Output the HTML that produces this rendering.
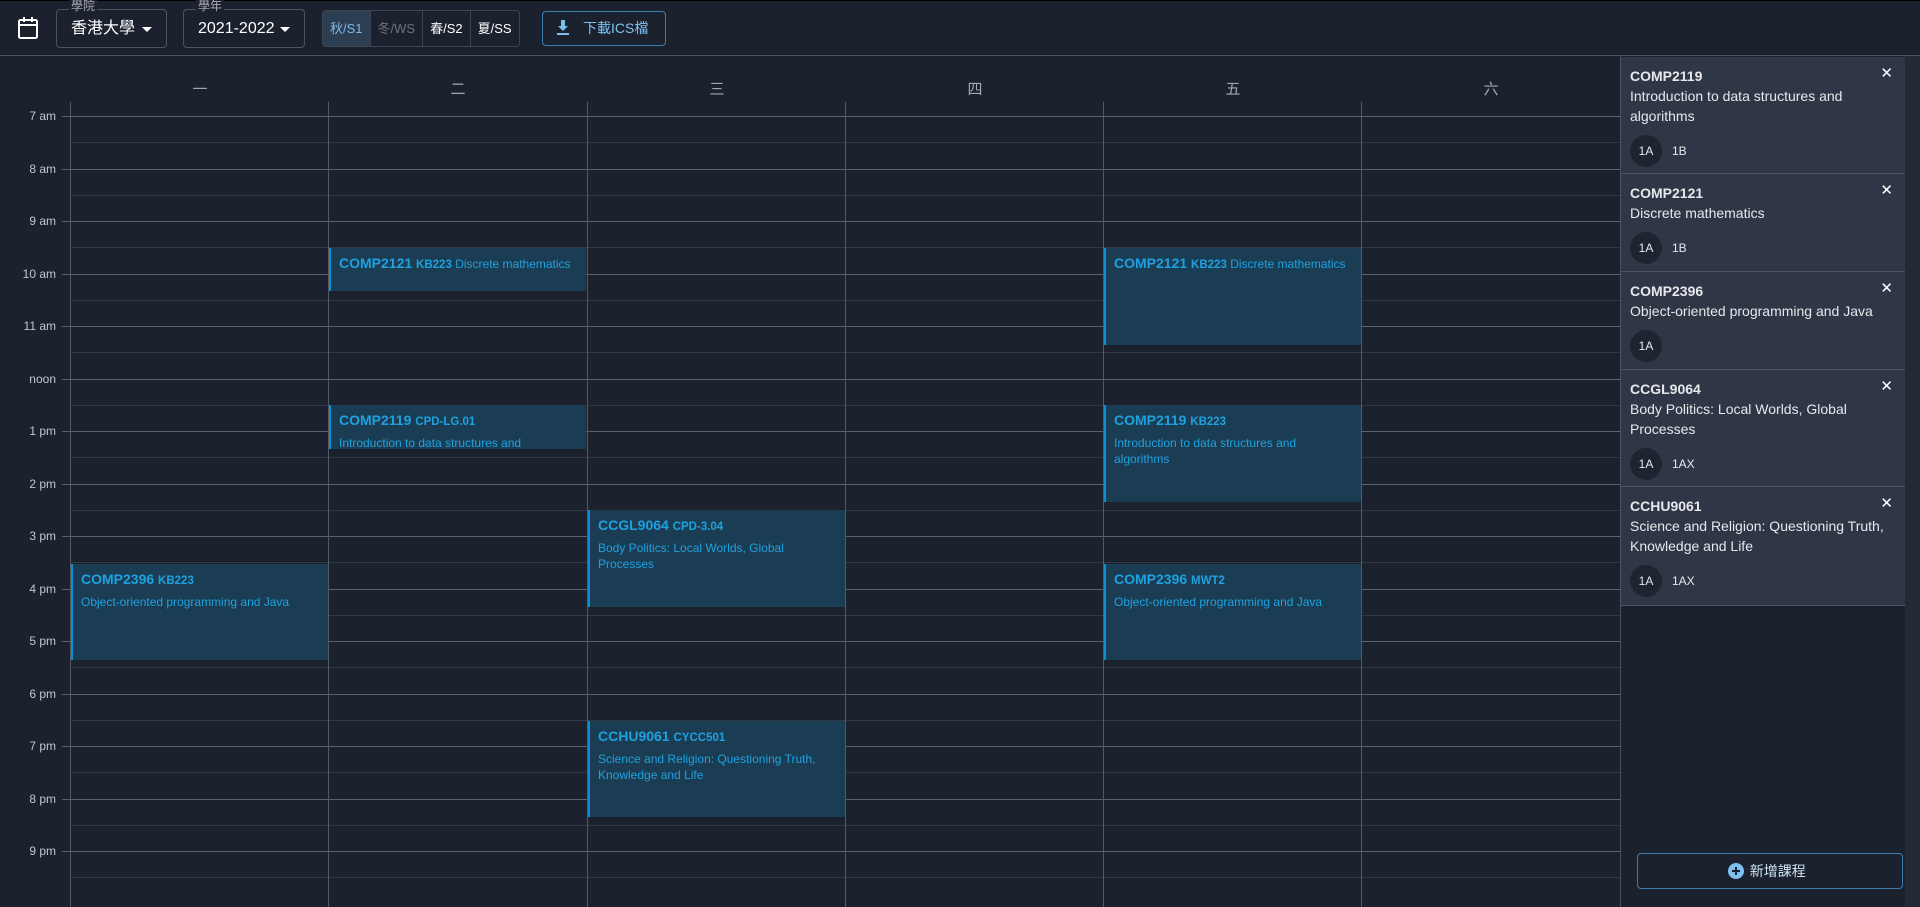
<!DOCTYPE html>
<html><head><meta charset="utf-8"><style>
*{box-sizing:border-box;margin:0;padding:0}
body{width:1920px;height:907px;background:#1b222d;font-family:"Liberation Sans","Noto Sans CJK TC",sans-serif;color:#e6e8eb;position:relative;overflow:hidden}
.abs{position:absolute}
.hdr{left:0;top:0;width:1920px;height:56px;border-bottom:1px solid #4a5260;border-top:1px solid #000}
.sel{border:1px solid #4a5563;border-radius:4px;height:39px;top:9px;font-size:16px;color:#fff;padding:0 0 0 14px;line-height:37px;white-space:nowrap}
.sel .lb{position:absolute;top:-11px;left:12px;font-size:12px;line-height:14px;color:#aab;background:#1b222d;padding:0 2px}
.sel .ar{position:absolute;right:14px;top:17px;border-left:5px solid transparent;border-right:5px solid transparent;border-top:5px solid #fff}
.tg{top:10px;left:322px;height:37px;border:1px solid #3c4554;border-radius:4px;display:flex;font-size:13px;line-height:35px;white-space:nowrap}
.tg div{padding:0 7px;border-right:1px solid #3c4554;color:#fff}
.vl{width:1px;background:#525a66;top:102px;height:805px}
.hl{left:62px;width:1558px;height:1px;background:#5a626d}
.hh{left:71px;width:1549px;height:1px;background:#2f3844}
.tl{width:56px;text-align:right;font-size:12px;color:#c3c7cc;left:0}
.day{top:78px;width:258px;text-align:center;font-size:15px;color:#a0a8b2}
.ev{background:#1b3d53;border-left:2px solid #0b8fd6;color:#1ea1e0;padding:7px 8px;font-size:12px;line-height:16px;overflow:hidden;width:257px}
.ev b{font-size:14px}.ev b small{font-size:11.5px}
.card{left:1621px;width:284px;background:#2f3747;border-bottom:1px solid #4b5566;padding:9px 9px;font-size:14px;line-height:20px}
.card h4{font-size:14px;font-weight:bold}
.card .x{position:absolute;right:12px;top:7px;font-size:15px;color:#fff}
.chips{display:flex;align-items:center;margin-top:9px;font-size:12px}
.chip{width:32px;height:32px;border-radius:50%;background:#1e2530;text-align:center;line-height:32px;margin-right:10px}
</style></head><body>
<div class="abs hdr"></div>
<svg class="abs" style="left:17px;top:16px" width="22" height="24" viewBox="0 0 22 24"><rect x="2" y="4" width="18" height="18" rx="1.5" fill="none" stroke="#fff" stroke-width="2"/><line x1="2" y1="9" x2="20" y2="9" stroke="#fff" stroke-width="2"/><line x1="7" y1="1" x2="7" y2="6" stroke="#fff" stroke-width="2"/><line x1="15" y1="1" x2="15" y2="6" stroke="#fff" stroke-width="2"/></svg>
<div class="abs sel" style="left:56px;width:111px"><span class="lb">學院</span>香港大學<span class="ar"></span></div>
<div class="abs sel" style="left:183px;width:122px"><span class="lb">學年</span>2021-2022<span class="ar"></span></div>
<div class="abs tg"><div style="background:#2c3e52;color:#7fb8e6">秋/S1</div><div style="color:#6c7480">冬/WS</div><div>春/S2</div><div style="border:0">夏/SS</div></div>
<div class="abs" style="left:542px;top:11px;width:124px;height:35px;border:1px solid #3d7eae;border-radius:4px;color:#7cc0f0;font-size:14px;line-height:33px;padding-left:40px">下載ICS檔</div>
<svg class="abs" style="left:557px;top:20px" width="12" height="15"><path d="M4 0h4v6h3l-5 5-5-5h3z M0 13h12v2H0z" fill="#7cc0f0"/></svg>

<div class="abs day" style="left:71px">一</div><div class="abs day" style="left:329px">二</div><div class="abs day" style="left:588px">三</div><div class="abs day" style="left:846px">四</div><div class="abs day" style="left:1104px">五</div><div class="abs day" style="left:1362px">六</div>

<div id="g"></div>
<script>
var g=document.getElementById('g'),h='';
var lab=['7 am','8 am','9 am','10 am','11 am','noon','1 pm','2 pm','3 pm','4 pm','5 pm','6 pm','7 pm','8 pm','9 pm'];
for(var i=0;i<15;i++){var y=116+i*52.5;h+='<div class="abs hl" style="top:'+Math.round(y)+'px"></div><div class="abs tl" style="top:'+Math.round(y-7)+'px">'+lab[i]+'</div>';h+='<div class="abs hh" style="top:'+Math.round(y+26)+'px"></div>';}
[70,328,587,845,1103,1361].forEach(function(x){h+='<div class="abs vl" style="left:'+x+'px"></div>'});
g.innerHTML=h;
</script>

<div class="abs ev" style="left:329px;top:248px;height:43px"><b>COMP2121 <small>KB223</small></b> Discrete mathematics</div>
<div class="abs ev" style="left:1104px;top:248px;height:97px"><b>COMP2121 <small>KB223</small></b> Discrete mathematics</div>
<div class="abs ev" style="left:329px;top:405px;height:44px"><b>COMP2119 <small>CPD-LG.01</small></b><br><div style="margin-top:5px">Introduction to data structures and</div></div>
<div class="abs ev" style="left:1104px;top:405px;height:97px"><b>COMP2119 <small>KB223</small></b><div style="margin-top:5px">Introduction to data structures and algorithms</div></div>
<div class="abs ev" style="left:588px;top:510px;height:97px"><b>CCGL9064 <small>CPD-3.04</small></b><div style="margin-top:5px">Body Politics: Local Worlds, Global Processes</div></div>
<div class="abs ev" style="left:71px;top:564px;height:96px"><b>COMP2396 <small>KB223</small></b><div style="margin-top:5px">Object-oriented programming and Java</div></div>
<div class="abs ev" style="left:1104px;top:564px;height:96px"><b>COMP2396 <small>MWT2</small></b><div style="margin-top:5px">Object-oriented programming and Java</div></div>
<div class="abs ev" style="left:588px;top:721px;height:96px"><b>CCHU9061 <small>CYCC501</small></b><div style="margin-top:5px">Science and Religion: Questioning Truth, Knowledge and Life</div></div>

<div class="abs" style="left:1620px;top:56px;width:300px;height:851px;background:#1b222d;border-left:1px solid #4a5260"></div>
<div class="abs" style="left:1905px;top:56px;width:15px;height:851px;background:#232a35"></div>
<div class="abs card" style="top:57px;height:117px"><h4>COMP2119</h4><span class="x">✕</span>Introduction to data structures and algorithms<div class="chips"><div class="chip">1A</div>1B</div></div>
<div class="abs card" style="top:174px;height:98px"><h4>COMP2121</h4><span class="x">✕</span>Discrete mathematics<div class="chips"><div class="chip">1A</div>1B</div></div>
<div class="abs card" style="top:272px;height:98px"><h4>COMP2396</h4><span class="x">✕</span>Object-oriented programming and Java<div class="chips"><div class="chip">1A</div></div></div>
<div class="abs card" style="top:370px;height:117px"><h4>CCGL9064</h4><span class="x">✕</span>Body Politics: Local Worlds, Global Processes<div class="chips"><div class="chip">1A</div>1AX</div></div>
<div class="abs card" style="top:487px;height:119px"><h4>CCHU9061</h4><span class="x">✕</span>Science and Religion: Questioning Truth, Knowledge and Life<div class="chips"><div class="chip">1A</div>1AX</div></div>

<div class="abs" style="left:1637px;top:853px;width:266px;height:36px;border:1px solid #3d7eae;border-radius:4px;color:#cfe3f3;font-size:14px;text-align:center;line-height:34px">&nbsp;&nbsp;&nbsp;&nbsp;新增課程</div>
<svg class="abs" style="left:1727px;top:862px" width="18" height="18"><circle cx="9" cy="9" r="8" fill="#7cc0f0"/><path d="M9 5v8M5 9h8" stroke="#1b222d" stroke-width="2"/></svg>
</body></html>
